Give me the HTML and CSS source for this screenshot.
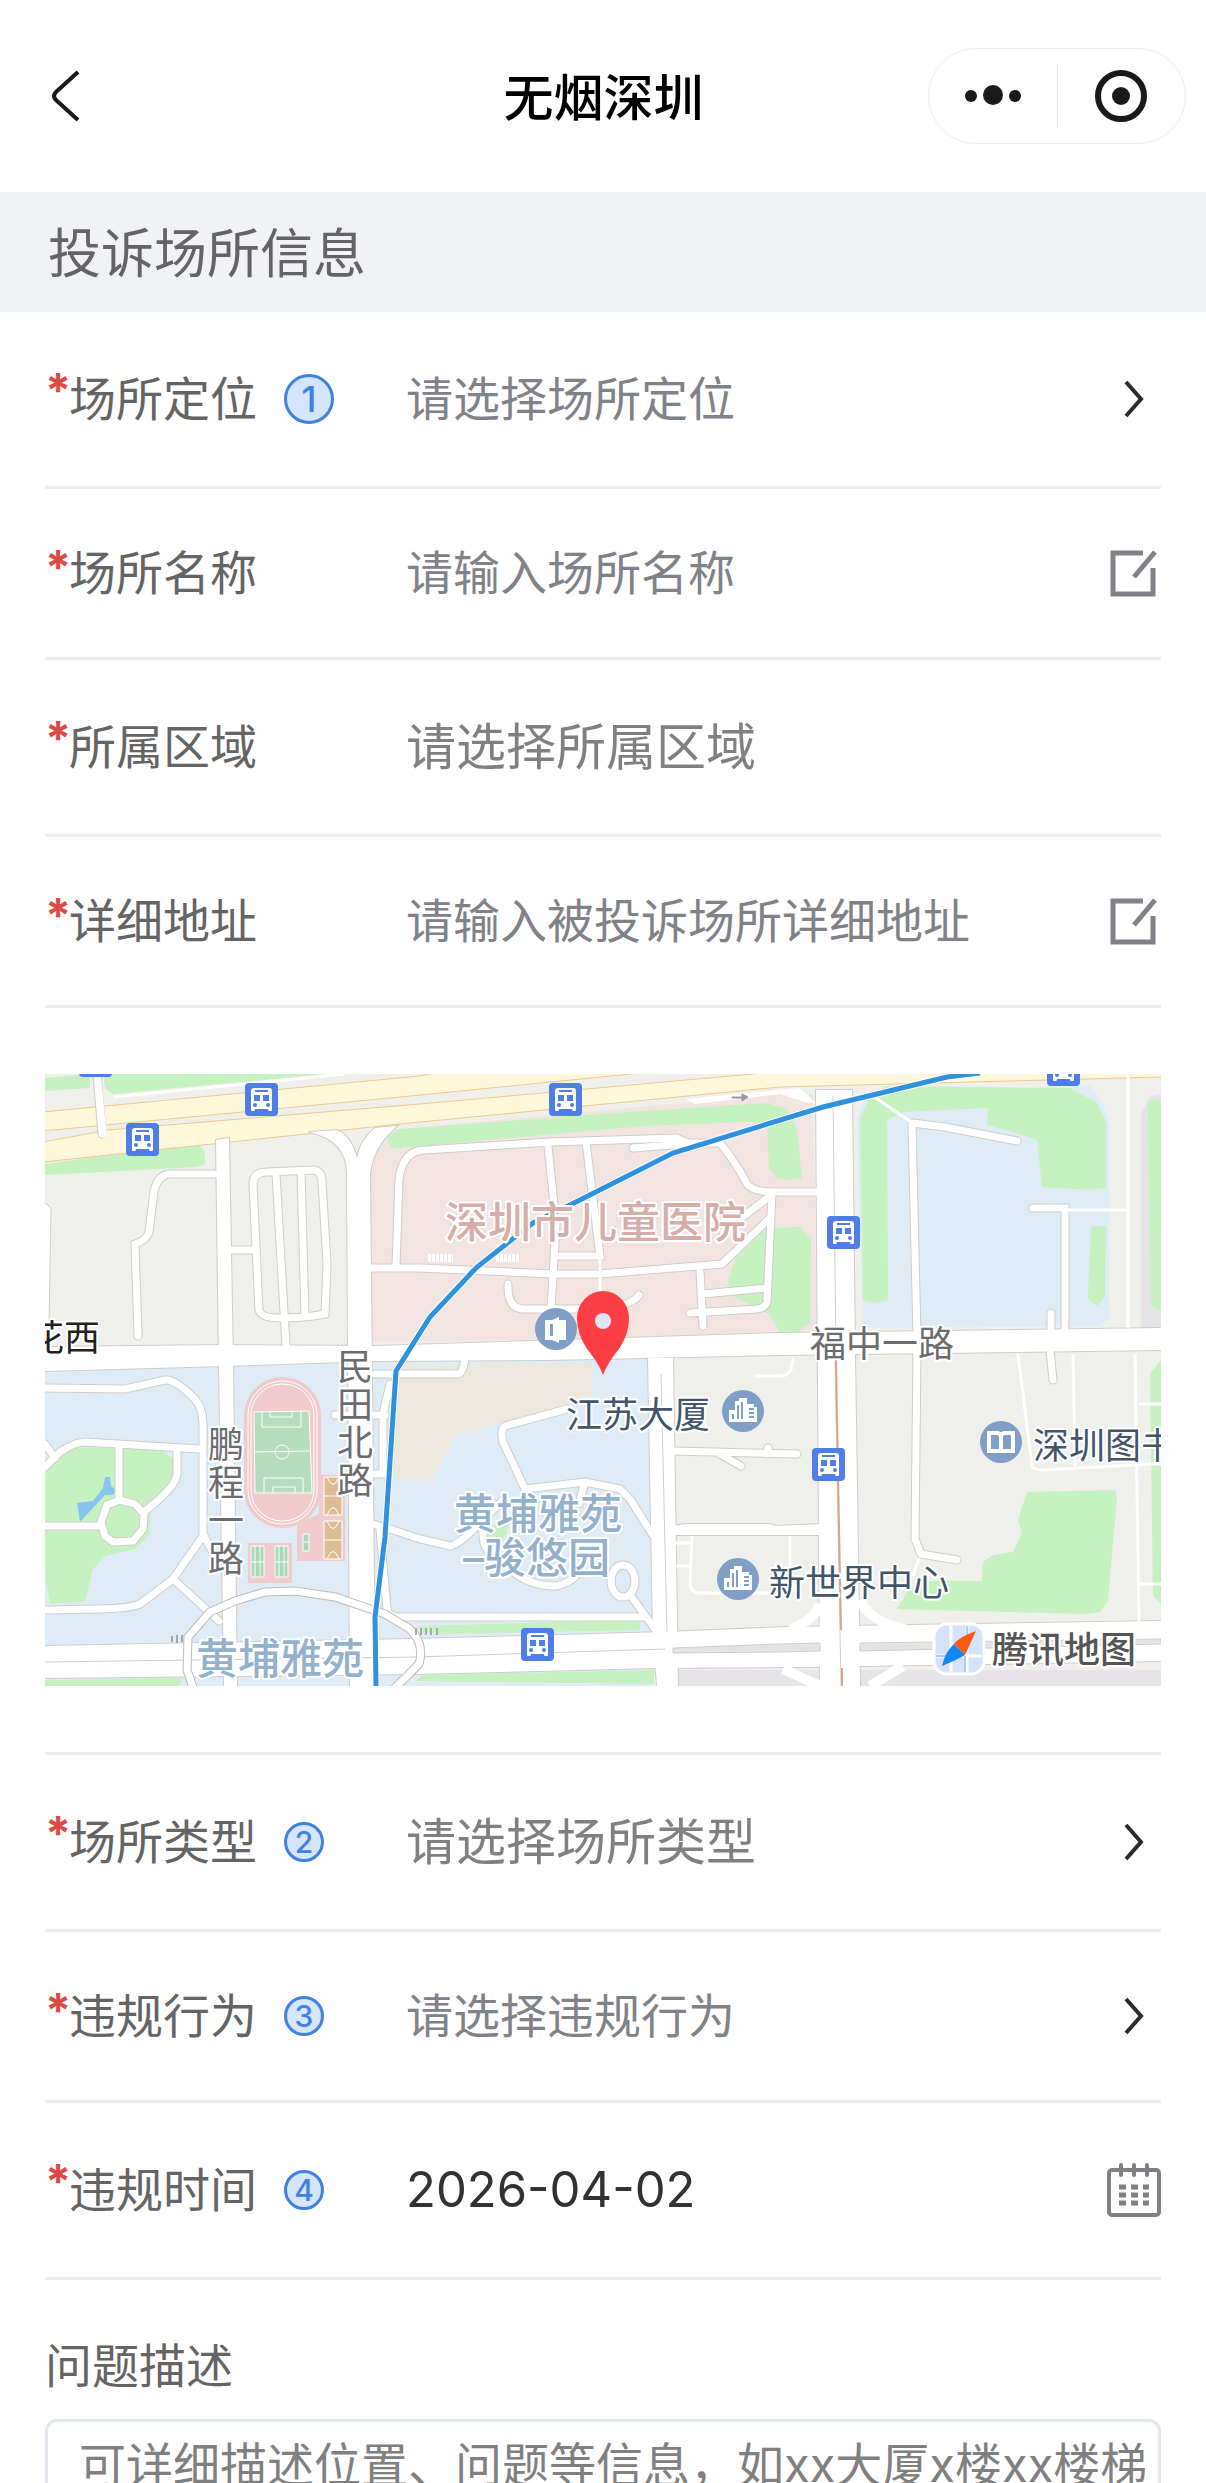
FILE: index.html
```html
<!DOCTYPE html>
<html lang="zh-CN">
<head>
  <meta charset="UTF-8" />
  <meta name="viewport" content="width=device-width, initial-scale=1.0" />
  <title>无烟深圳</title>
  <link rel="stylesheet" href="styles.css">
</head>
<body>

<header class="navbar">
  <button type="button" class="back-btn" aria-label="返回">
    <svg viewBox="0 0 30 52" class="back-icon"><path d="M27 2 5 22Q1 26 5 30L27 50"/></svg>
  </button>
  <h1>无烟深圳</h1>
  <div class="capsule">
    <button type="button" aria-label="更多">
      <svg viewBox="0 0 56 56" class="capsule-icon"><circle cx="6" cy="28" r="6"/><circle cx="28" cy="27" r="10"/><circle cx="50" cy="28" r="6"/></svg>
    </button>
    <button type="button" aria-label="关闭">
      <svg viewBox="0 0 56 56" class="capsule-icon"><circle cx="28" cy="28" r="23" class="ring"/><circle cx="28" cy="28" r="9"/></svg>
    </button>
  </div>
</header>

<main>
  <h2 class="section-title">投诉场所信息</h2>

  <form class="form">
    <div class="row tall">
      <label for="location"><b>*</b>场所定位<i class="badge big">1</i></label>
      <button type="button" id="location" class="field">请选择场所定位</button>
      <svg viewBox="0 0 54 54" class="icon"><path class="arrow" d="M19 10 34 27 19 44"/></svg>
    </div>

    <div class="row">
      <label for="place"><b>*</b>场所名称</label>
      <input type="text" id="place" class="field" placeholder="请输入场所名称">
      <svg viewBox="0 0 54 54" class="icon"><path class="edit" d="M36 7H6V48H46V22M48 6 27 31"/></svg>
    </div>

    <div class="row tall">
      <label for="area"><b>*</b>所属区域</label>
      <select id="area" class="field large">
        <option>请选择所属区域</option>
      </select>
    </div>

    <div class="row">
      <label for="address"><b>*</b>详细地址</label>
      <input type="text" id="address" class="field" placeholder="请输入被投诉场所详细地址">
      <svg viewBox="0 0 54 54" class="icon"><path class="edit" d="M36 7H6V48H46V22M48 6 27 31"/></svg>
    </div>

    <div class="map-box">
      <svg viewBox="0 0 1116 612" class="map" role="img" aria-label="地图">
        <defs>
          <symbol id="bus" viewBox="0 0 33 33">
            <rect width="33" height="33" rx="4" fill="#4f7fe6"/>
            <path fill="#fff" d="M9 5h15q3 0 3 3v19q0 1-1 1h-2q-1 0-1-2H10q0 2-1 2H7q-1 0-1-1V8q0-3 3-3z"/>
            <path fill="#4f7fe6" d="M10 7h13v2H10zM9 12h6v6H9zM18 12h6v6h-6z"/>
            <circle cx="10" cy="22" r="2" fill="#4f7fe6"/><circle cx="23" cy="22" r="2" fill="#4f7fe6"/>
          </symbol>
          <symbol id="tower" viewBox="0 0 42 42">
            <circle cx="21" cy="21" r="21" fill="#7f9fc6"/>
            <path fill="#fff" d="M7 32V20h6V11h4V8h8v6h7v3h3v15z"/>
            <path stroke="#7f9fc6" stroke-width="2" d="M11 24v5M16 15v14M20 12v17M27 19h5M27 23h5M27 27h5"/>
          </symbol>

          <!-- main streets -->
          <g id="streets">
            <path d="M0 273 180 271 330 272 735 259 1116 254V276L735 281 600 284 500 286 330 287 180 292 0 297z"/>
            <path d="M171 66 184 64 188 290 192 612H179L174 290z"/>
            <path d="M264 58Q302 66 302 100L305 612H330L325 100Q328 72 352 52L330 54Q315 66 312 84 306 62 292 56z"/>
            <path d="M603 284 628 284 633 612H612L608 560z"/>
            <path d="M771 16 807 16 810 280 815 612H775z"/>
            <path d="M0 572 370 565 620 558 740 553 1116 547V587L760 593 610 594 370 600 0 604z"/>
            <path d="M628 452 640 450 725 450 731 452 776 450V461H628z"/>
          </g>

          <!-- lanes inside the blocks -->
          <g id="lanes">
            <path d="M52 0 57 60"/>
            <path d="M172 100H125Q110 101 108 125L104 158Q102 166 90 170L93 262"/>
            <path d="M0 134 2 136 0 250"/>
            <path d="M214 236 208 110Q208 98 222 98L268 96Q277 97 277 108L282 190 280 240Q260 244 235 244 216 244 214 236zM231 100 241 272M256 98 260 242M184 176H210"/>
            <path d="M325 194H375L508 200H555L677 190 725 144M351 192 354 105Q358 76 380 76L505 68 632 64 642 69 675 69Q692 90 702 110 708 118 730 118H771M503 72 511 150 506 235M541 68 555 182H510M463 210Q462 234 478 235H520Q586 236 594 221M727 120 722 228Q720 234 712 235L645 239M655 198 658 252M658 220 722 214M678 158 725 122M588 74 640 70"/>
            <path d="M867 49 872 262M872 276 870 465 876 480 912 486M867 49 900 53 972 67M988 134H1020V256M1006 254V239M1005 276 1008 306"/>
            <path d="M628 377 752 380M675 380 696 392M723 380V374M330 300H412Q418 300 420 285"/>
            <path d="M328 450 345 455 375 465 405 472Q415 470 438 446L458 426M522 335 460 352Q455 355 458 368L480 415 540 408 575 415 585 425 607 460M540 408 534 430M438 456Q436 480 460 490 480 512 510 512 530 508 535 495M586 522 612 558"/>
            <ellipse cx="578" cy="507" rx="12" ry="16"/>
            <path d="M335 456 342 535Q344 543 355 543H600"/>
            <path d="M0 314 80 315 120 306Q130 305 150 325 158 335 158 350V460L166 475M158 462 128 505 95 530Q88 534 55 535L0 536M128 505 174 547"/>
            <path d="M0 370 10 384M0 393 15 378Q30 368 40 368L155 375M74 370V426M132 374V400Q131 413 100 437M62 431 75 426 90 430 99 440 98 455 88 467 68 468 60 462 56 448zM0 452H55"/>
            <path d="M290 341H340M328 400H338V340L345 310"/>
          </g>

          <path id="loop" d="M149 616 142 596 143 563 165 538 190 527 220 518 250 517 290 523 340 540 365 555Q380 570 374 590L350 614"/>
        </defs>

        <rect width="1116" height="612" fill="#efefeb"/>

        <!-- land use -->
        <g fill="#dfecf5">
          <path d="M0 292 612 284 606 612H0z"/>
          <path d="M835 20 1045 12 1058 30 1064 50V245L1055 252 818 254 812 45 820 25z"/>
        </g>
        <path fill="#f2e4e1" d="M325 75 345 56 735 20H768L772 262 327 268z"/>
        <path fill="#ede8de" d="M345 292 547 288V321L520 332 410 362 388 405H335z"/>
        <path fill="#e6e4e7" d="M1096 40 1105 22 1116 20V276H1096zM632 596H1116V612H632z"/>
        <g fill="#c6f1c0">
          <path d="M0 4 45 0V14L0 17zM58 0H280L68 20 60 14zM0 90 100 76 155 72 160 78V90L152 93 0 101z"/>
          <path d="M342 62 355 55 555 40 690 31 722 29 742 35 752 55 757 104 745 106 732 104 724 95 722 49 700 48 600 52 355 74H345z"/>
          <path d="M705 170 722 154 755 153 766 165 765 248 752 259 735 258 724 240 688 222 683 208 690 185z"/>
          <path d="M815 46 825 23 840 12 1025 14 1052 29 1061 49V114L1045 116 997 113 992 66 975 60 942 51 943 34 858 38 842 46 843 226 830 229 818 226z"/>
          <path d="M1046 152H1061L1060 223 1052 232 1043 224zM1103 28 1116 24V236L1106 232zM1105 300 1116 286V530L1108 522z"/>
          <path d="M982 418 1070 416 1072 423 1063 526 1055 538 1042 540 852 535 862 518 878 507H937L938 488 948 481 968 478 977 459 973 446z"/>
          <path d="M0 400 12 385 22 373 112 374 128 385 130 405 115 420 105 430V460L90 475 60 482 48 495 40 527 5 530 0 500z"/>
          <path d="M372 552 595 546V556L398 560 378 558zM440 455 465 445 460 465 445 480zM490 425 500 420V435z"/>
        </g>
        <path fill="#87c5f0" d="M32 429 48 427 58 414 60 403H65L66 412 71 416 68 421 60 421 47 435 35 448z"/>

        <!-- highway -->
        <g class="highway">
          <path d="M-2 38 375 2 395-2H606L355 23-2 57z"/>
          <path d="M-2 68 63 56 375 30 730-2H1118V3L735 13 355 50-2 88z"/>
        </g>
        <path d="M68 23 300 0" stroke="#fff" stroke-width="3"/>
        <path d="M640 25 755 14 772 30 760 28 735 20 650 30z" fill="#fff"/>

        <use href="#lanes" class="lane-edge"/>
        <use href="#streets" class="street-edge"/>
        <use href="#lanes" class="lane"/>
        <use href="#streets" class="street"/>
        <path d="M53 8 58 60" class="lane"/>
        <path class="path" d="M828 22 866 48M1020 136H1083M1083 0V254M973 280 987 392Q988 396 1000 396L1105 390M1028 280 1030 392M1090 280 1094 550M1094 330H1116M1094 390H1116M1094 510H1116M647 462 645 510Q646 519 655 519H725M628 469H645M628 492H645M745 462V500M710 302H735Q748 302 748 284M555 182V222M874 484 868 502"/>
        <path class="ramp" d="M815 526Q825 548 862 556M775 530Q770 545 745 556M738 595 775 612M858 592 825 612"/>
        <path class="divider" d="M0 588 370 583 620 575M616 300 622 558M788 22 791 280M790 284 796 612"/>
        <path d="M628 574 735 570 775 569V577L735 578 628 579zM815 569 1116 565V570L815 577z" fill="#e4e4e2" stroke="#cfcdca"/>
        <path d="M791 284 793 400 796 556M797 594V612" stroke="#d9a58a" stroke-width="2"/>
        <path fill="#c6f1c0" d="M0 606 138 604 134 612H0zM378 601 609 596V610L370 607z"/>
        <use href="#loop" class="loop-edge"/>
        <use href="#loop" class="lane"/>
        <path d="M127 562V568M132 561V569M137 561V568M371 554V561M376 554V561M381 554V561M386 554V561M392 554V561" stroke="#aaa6a2" stroke-width="2"/>
        <path d="M383 184H408M451 184H475" stroke="#fff" stroke-width="8" stroke-dasharray="3 1"/>

        <!-- sports ground -->
        <path fill="#f0cbcd" d="M274 401H300V487H252V450L274 440zM203 469H247V509H203z"/>
        <g class="track">
          <rect x="199" y="303" width="77" height="151" rx="38" fill="#f0cbcd" stroke="none"/>
          <rect x="203" y="307" width="69" height="143" rx="34"/>
          <rect x="206" y="310" width="63" height="137" rx="31"/>
          <path d="M209 338 264 337 267 419 210 419z" fill="#b5dcbc"/>
          <path d="M209 378 265 377M217 338V353H256V337M225 338V343H247V337M219 419V404H258V419M228 419V413H250V419"/>
          <circle cx="237" cy="378" r="7"/>
        </g>
        <g class="courts">
          <path fill="#dcbd93" d="M279 403H297V441H279zM279 447H297V485H279z"/>
          <path d="M279 422H297M279 466H297M282 403Q288 418 294 403M282 441Q288 426 294 441M282 447Q288 462 294 447M282 485Q288 470 294 485"/>
          <path fill="#a9d8b6" d="M206 472H219V503H206zM230 472H243V503H230zM258 460H264V477H258z"/>
          <path d="M210 472V503M215 472V503M206 488H219M234 472V503M239 472V503M230 488H243M258 468H264"/>
        </g>

        <!-- metro line -->
        <path class="metro-halo" d="M935-1 902 3 778 33 628 79 525 131 488 149 432 193 385 243 351 297 340 463 330 543 331 613"/>
        <path class="metro" d="M935-1 902 3 778 33 628 79 525 131 488 149 432 193 385 243 351 297 340 463 330 543 331 613"/>

        <path d="M687 23H697V20L703 23 697 27V24H687z" fill="#999" stroke="#999"/>

        <!-- bus stops -->
        <use href="#bus" x="34" y="-30" width="33" height="33"/>
        <use href="#bus" x="200" y="9" width="33" height="33"/>
        <use href="#bus" x="81" y="49" width="33" height="33"/>
        <use href="#bus" x="504" y="9" width="33" height="33"/>
        <use href="#bus" x="1002" y="-21" width="33" height="33"/>
        <use href="#bus" x="782" y="142" width="33" height="33"/>
        <use href="#bus" x="476" y="554" width="33" height="33"/>
        <use href="#bus" x="767" y="374" width="33" height="33"/>

        <!-- places -->
        <use href="#tower" x="677" y="316" width="42" height="42"/>
        <use href="#tower" x="672" y="484" width="42" height="42"/>
        <circle cx="956" cy="368" r="21" fill="#7f9fc6"/>
        <path d="M944 359H953L956 361 959 359H968V377H944zM956 361V377" fill="none" stroke="#fff" stroke-width="4"/>
        <circle cx="511" cy="255" r="21" fill="#7f9fc6"/>
        <path d="M500 246H507L514 243V246H521V266H514V269L507 266H500z" fill="#fff"/>
        <path d="M505 250H508V262H505z" fill="#7f9fc6"/>

        <g class="labels">
          <text x="400" y="164" class="hospital">深圳市儿童医院</text>
          <text x="409" y="455" class="estate">黄埔雅苑</text>
          <text x="418" y="499" class="estate">–骏悠园</text>
          <text x="151" y="600" class="estate">黄埔雅苑</text>
          <text x="-17" y="277" class="metro-name">花西</text>
          <text x="765" y="283" class="road">福中一路</text>
          <text class="road"><tspan x="163" y="384">鹏</tspan><tspan x="163" dy="38">程</tspan><tspan x="163" dy="38">一</tspan><tspan x="163" dy="38">路</tspan></text>
          <text class="road"><tspan x="292" y="306">民</tspan><tspan x="292" dy="38">田</tspan><tspan x="292" dy="38">北</tspan><tspan x="292" dy="38">路</tspan></text>
          <text x="521" y="354">江苏大厦</text>
          <text x="724" y="522">新世界中心</text>
          <text x="988" y="385">深圳图书馆</text>
          <text x="947" y="589" class="brand">腾讯地图</text>
        </g>

        <!-- marker -->
        <path d="M558 301Q553 288 542 275 532 260 532 244A26 27 0 0 1 584 244Q584 260 574 275 563 288 558 301z" fill="#fb3f44"/>
        <circle cx="558" cy="247" r="8" fill="#dfe6f3"/>

        <!-- map logo -->
        <rect x="889" y="550" width="50" height="50" rx="13" fill="#d5e3fa" stroke="#fff" stroke-width="3"/>
        <path d="M906 552V598M922 552V598M891 582H937" stroke="#fff" stroke-width="3"/>
        <path d="M922 552V568M920 582V598M891 582H905" stroke="#a9cdf5" stroke-width="2"/>
        <path d="M931 557 920 581 909 570Q914 563 931 557z" fill="#fb5a12"/>
        <path d="M909 570 920 581Q914 585 897 592 900 578 909 570z" fill="#1686f5"/>
      </svg>
    </div>

    <div class="row tall">
      <label for="type"><b>*</b>场所类型<i class="badge">2</i></label>
      <select id="type" class="field large">
        <option>请选择场所类型</option>
      </select>
      <svg viewBox="0 0 54 54" class="icon"><path class="arrow" d="M19 10 34 27 19 44"/></svg>
    </div>

    <div class="row">
      <label for="behavior"><b>*</b>违规行为<i class="badge">3</i></label>
      <button type="button" id="behavior" class="field">请选择违规行为</button>
      <svg viewBox="0 0 54 54" class="icon"><path class="arrow" d="M19 10 34 27 19 44"/></svg>
    </div>

    <div class="row tall">
      <label for="date"><b>*</b>违规时间<i class="badge">4</i></label>
      <input type="text" id="date" class="field date" value="2026-04-02" readonly>
      <svg viewBox="0 0 54 54" class="icon">
        <rect x="2" y="7" width="50" height="45" rx="3" class="cal"/>
        <path class="cal" d="M14 2V12M27 2V12M40 2V12"/>
        <path class="cal-days" d="M12 24H42M12 32H42M12 40H42"/>
      </svg>
    </div>

    <div class="desc">
      <label for="desc">问题描述</label>
      <textarea id="desc" rows="5" placeholder="可详细描述位置、问题等信息，如xx大厦x楼xx楼梯"></textarea>
    </div>
  </form>
</main>

</body>
</html>
```
FILE: styles.css
```css
* {
  box-sizing: border-box;
}

body {
  margin: 0;
  height: 100vh;
  display: flex;
  flex-direction: column;
  background: #fefefe;
  color: #646464;
  font-family: Inter, 'Noto Sans CJK SC', sans-serif;
  font-size: 47px;
}

main {
  flex: 1;
  min-height: 0;
  overflow-y: auto;
  scrollbar-width: none;
}

button,
input,
select,
textarea {
  font: inherit;
  color: inherit;
  background: none;
  border: none;
  border-radius: 0;
  padding: 0;
  margin: 0;
  outline: none;
}

button {
  cursor: pointer;
}

/* top bar */
.navbar {
  display: grid;
  grid-template-columns: 1fr auto 1fr;
  align-items: center;
  height: 192px;
  padding: 0 20px 0 51px;
}

.navbar h1 {
  margin: 0;
  padding: 4px 30px 0 0;
  color: #000;
  font-size: 50px;
  font-weight: 500;
  line-height: 60px;
}

.back-btn {
  justify-self: start;
  display: flex;
}

.back-icon {
  width: 30px;
  height: 52px;
  fill: none;
  stroke: #1a1a1a;
  stroke-width: 4;
}

.capsule {
  justify-self: end;
  display: flex;
  align-items: center;
  width: 258px;
  height: 96px;
  border: 1px solid #ececec;
  border-radius: 48px;
}

.capsule button {
  flex: 1;
  display: flex;
  align-items: center;
  justify-content: center;
  height: 64px;
}

.capsule button + button {
  border-left: 1px solid #e2e2e2;
}

.capsule-icon {
  width: 56px;
  height: 56px;
  fill: #1a1a1a;
}

.capsule-icon .ring {
  fill: none;
  stroke: #1a1a1a;
  stroke-width: 6;
}

.section-title {
  margin: 0;
  padding: 26px 48px 22px;
  background: #f0f2f6;
  font-size: 53px;
  font-weight: 400;
  line-height: 72px;
}

/* form rows */
.form {
  padding: 0 45px;
}

.row {
  display: grid;
  grid-template-columns: 361px 1fr 54px;
  align-items: center;
  padding: 54px 0;
  border-bottom: 3px solid #ededee;
  line-height: 60px;
}

.row.tall {
  line-height: 66px;
}

.row label {
  display: flex;
  align-items: center;
}

/* required mark sits a bit above the text */
.row b {
  align-self: flex-start;
  width: 24px;
  color: #dc4a45;
  line-height: 48px;
}

.badge {
  width: 40px;
  height: 40px;
  margin-left: 27px;
  border: 3px solid #3f80e0;
  border-radius: 50%;
  background: #d5e5fb;
  color: #3f80e0;
  font-size: 30px;
  font-style: normal;
  font-weight: 500;
  line-height: 34px;
  text-align: center;
}

.badge.big {
  width: 50px;
  height: 50px;
  font-size: 36px;
  line-height: 44px;
}

.field {
  width: 100%;
  height: 60px;
  line-height: 60px;
  color: #808287;
  text-align: left;
  appearance: none;
}

.tall .field {
  height: 66px;
  line-height: 66px;
}

.field::placeholder {
  color: #808287;
  opacity: 1;
}

.field.large {
  color: #808080;
  font-size: 50px;
}

.field.date {
  color: #323233;
  font-size: 49px;
}

.icon {
  width: 54px;
  height: 54px;
  fill: none;
}

.icon .arrow {
  stroke: #2b2b2b;
  stroke-width: 4;
}

.icon .edit {
  stroke: #808287;
  stroke-width: 5;
}

.icon .cal {
  stroke: #808084;
  stroke-width: 4;
  stroke-linecap: round;
}

.icon .cal-days {
  stroke: #808084;
  stroke-width: 5;
  stroke-dasharray: 7 5;
}

.desc {
  padding-top: 56px;
}

.desc label {
  display: block;
  margin-bottom: 23px;
  line-height: 60px;
}

.desc textarea {
  display: block;
  width: 100%;
  padding: 10px 8px 10px 31px;
  border: 3px solid #e3e7ef;
  border-radius: 12px;
  line-height: 66px;
  resize: none;
}

.desc textarea::placeholder {
  color: #808080;
  opacity: 1;
}

/* map */
.map-box {
  padding: 66px 0;
  border-bottom: 3px solid #ededee;
}

.map {
  display: block;
  width: 100%;
  height: auto;
  overflow: hidden;
}

.highway {
  fill: #fff7d9;
  stroke: #ecc98f;
  stroke-width: 1;
}

.street-edge {
  fill: #fff;
  stroke: #cfcdca;
  stroke-width: 2;
}

.street {
  fill: #fff;
}

.lane-edge,
.loop-edge {
  fill: none;
  stroke: #cfcdca;
  stroke-width: 9;
  stroke-linecap: round;
}

.loop-edge {
  stroke: #c2bbb3;
}

.lane {
  fill: none;
  stroke: #fff;
  stroke-width: 7;
  stroke-linecap: round;
}

.path {
  fill: none;
  stroke: #fff;
  stroke-width: 3;
}

.ramp {
  fill: none;
  stroke: #fff;
  stroke-width: 10;
}

.divider {
  fill: none;
  stroke: #cfcdca;
}

.track,
.courts {
  fill: none;
  stroke: #fff;
  stroke-width: 1;
}

.metro-halo {
  fill: none;
  stroke: #fff;
  stroke-width: 7;
}

.metro {
  fill: none;
  stroke: #3092dc;
  stroke-width: 5;
}

.labels {
  fill: #42566b;
  stroke: #fff;
  stroke-width: 4;
  stroke-linejoin: round;
  paint-order: stroke;
  font-size: 36px;
}

.labels .hospital {
  fill: #d5aea8;
  font-size: 43px;
  font-weight: 500;
}

.labels .estate {
  fill: #94b1cc;
  font-size: 42px;
  font-weight: 500;
}

.labels .road {
  fill: #6b6c6e;
}

.labels .metro-name {
  fill: #222;
}

.labels .brand {
  fill: #555;
  font-weight: 500;
}
```
